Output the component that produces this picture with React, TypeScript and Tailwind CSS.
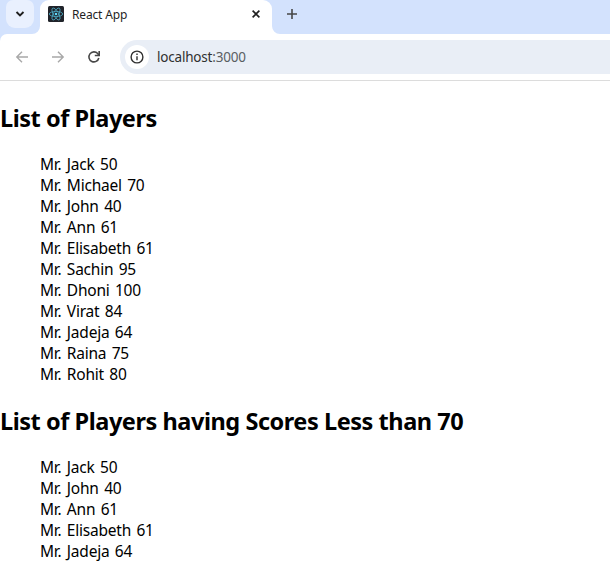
type Player = { name: string; score: number };

const players: Player[] = [
  { name: "Jack", score: 50 },
  { name: "Michael", score: 70 },
  { name: "John", score: 40 },
  { name: "Ann", score: 61 },
  { name: "Elisabeth", score: 61 },
  { name: "Sachin", score: 95 },
  { name: "Dhoni", score: 100 },
  { name: "Virat", score: 84 },
  { name: "Jadeja", score: 64 },
  { name: "Raina", score: 75 },
  { name: "Rohit", score: 80 },
];

function ReactLogo() {
  return (
    <svg viewBox="0 0 16 16" className="size-4 shrink-0">
      <rect width="16" height="16" rx="1.5" fill="#20232a" />
      <g fill="none" stroke="#4aa5bd" strokeWidth="0.85">
        <ellipse cx="8" cy="8" rx="6.7" ry="2.6" />
        <ellipse cx="8" cy="8" rx="6.7" ry="2.6" transform="rotate(60 8 8)" />
        <ellipse cx="8" cy="8" rx="6.7" ry="2.6" transform="rotate(120 8 8)" />
      </g>
      <circle cx="8" cy="8" r="1.3" fill="#61dafb" />
    </svg>
  );
}

function TabStrip() {
  return (
    <div className="flex h-[34px] items-start bg-[#d3e2fd]">
      <div className="flex h-[34px] w-10 shrink-0 items-start pl-1.5">
        <div className="size-7 shrink-0 rounded-b-[9px] rounded-t-[7px] bg-[#e9f0fe]">
          <svg viewBox="0 0 28 28" className="size-7" fill="none" stroke="#1f1f1f" strokeWidth="1.9">
            <path d="M10.5 12 14 15.4 17.5 12" />
          </svg>
        </div>
        <svg viewBox="0 0 8 8" className="-ml-0.5 size-2 shrink-0 self-end" fill="#fff">
          <path d="M8 0A8 8 0 0 1 0 8H8Z" />
        </svg>
      </div>
      <div className="flex h-[34px] w-[232px] shrink-0 items-start rounded-t-[9px] bg-white pl-2 pt-1.5">
        <ReactLogo />
        <span className="ml-2 mt-px text-[12px] leading-4 tracking-[-0.15px] text-[#1f1f1f]">React App</span>
        <svg viewBox="0 0 16 16" className="ml-auto mr-2 size-4" fill="none" stroke="#1f1f1f" strokeWidth="1.6">
          <path d="m4.6 4.6 6.8 6.8M11.4 4.6l-6.8 6.8" />
        </svg>
      </div>
      <svg viewBox="0 0 8 8" className="size-2 self-end" fill="#fff">
        <path d="M0 0A8 8 0 0 0 8 8H0Z" />
      </svg>
      <svg viewBox="0 0 16 16" className="ml-1 mt-1.5 size-4" fill="none" stroke="#474747" strokeWidth="1.6">
        <path d="M8 3v10M3 8h10" />
      </svg>
    </div>
  );
}

function Toolbar() {
  return (
    <div className="bg-[linear-gradient(to_right,#d3e2fd_10px,#fff_10px)]">
      <div className="flex h-[47px] items-center rounded-tl-[7px] border-b border-[#dcdcdc] bg-white pl-3.5">
        <svg viewBox="0 0 16 16" className="size-4" fill="none" stroke="#a8a8a8" strokeWidth="1.4">
          <path d="M14 8H3M8 2.8 2.8 8 8 13.2" />
        </svg>
        <svg viewBox="0 0 16 16" className="ml-5 size-4" fill="none" stroke="#a8a8a8" strokeWidth="1.4">
          <path d="M2 8h11M8 2.8 13.2 8 8 13.2" />
        </svg>
        <svg viewBox="0 0 16 16" className="ml-5 size-4" fill="none" stroke="#474747" strokeWidth="1.6">
          <path d="M12.8 9A5 5 0 1 1 11.7 4.6L13 6" />
          <path d="M13.2 2v4.5H8.8" />
        </svg>
        <div className="ml-[18px] flex h-[34px] flex-1 items-center rounded-l-full bg-[#e9eef6] pl-[5px]">
          <div className="flex size-6 items-center justify-center rounded-full bg-white">
            <svg viewBox="0 0 16 16" className="size-4" fill="none" stroke="#303030" strokeWidth="1.4">
              <circle cx="8" cy="8" r="5.9" />
              <path d="M8 7.2v4M8 4.6V6" />
            </svg>
          </div>
          <span className="ml-2 text-[13.5px] tracking-[-0.2px] text-[#303030]">
            localhost<span className="text-[#5a5e62]">:3000</span>
          </span>
        </div>
      </div>
    </div>
  );
}

function PlayerList({ title, items }: { title: string; items: Player[] }) {
  return (
    <section>
      <h2 className="whitespace-nowrap text-[23.5px] font-bold leading-8 tracking-[-0.45px]">{title}</h2>
      <ul className="my-5 pl-10 text-[15.5px] leading-[21px] tracking-[-0.23px] [word-spacing:1.6px]">
        {items.map((p) => (
          <li key={p.name}>
            Mr. {p.name} {p.score}
          </li>
        ))}
      </ul>
    </section>
  );
}

export default function App() {
  return (
    <div className="h-[581px] overflow-hidden bg-white font-['Noto_Sans','Open_Sans',sans-serif] text-black">
      <TabStrip />
      <Toolbar />
      <main className="pt-[21px]">
        <PlayerList title="List of Players" items={players} />
        <PlayerList title="List of Players having Scores Less than 70" items={players.filter((p) => p.score < 70)} />
      </main>
    </div>
  );
}
